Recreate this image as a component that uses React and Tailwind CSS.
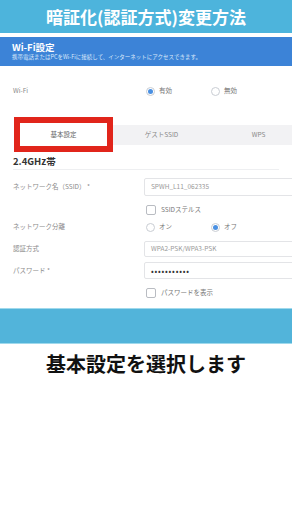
import React from "react";

const font = { fontFamily: '"Noto Sans CJK JP", "Noto Sans", sans-serif' };

function Radio({ checked, label }) {
  return (
    <div className="flex items-center gap-[4px]">
      <span className="flex h-[9px] w-[9px] items-center justify-center rounded-full border border-[#c9cdd3] bg-white">
        {checked && <span className="h-[5px] w-[5px] rounded-full bg-[#4a90e2]" />}
      </span>
      <span className="text-[6.5px] text-[#777]">{label}</span>
    </div>
  );
}

function Check({ label }) {
  return (
    <div className="flex items-center gap-[5px] pl-[2px]">
      <span className="h-[10px] w-[10px] rounded-[2px] border border-[#b9bcc2] bg-white" />
      <span className="text-[6.5px] text-[#777]">{label}</span>
    </div>
  );
}

function Input({ children, className = "" }) {
  return (
    <div className={`flex w-[170px] shrink-0 items-center rounded-[2px] border border-[#e3e4e7] bg-white px-[6px] text-[6.5px] ${className}`}>
      {children}
    </div>
  );
}

function Row({ label, children, className = "" }) {
  return (
    <div className={`flex items-center ${className}`}>
      <div className="w-[144px] shrink-0 pl-[13px] text-[6.5px] text-[#8a8a8a]">{label}</div>
      {children}
    </div>
  );
}

export default function App() {
  return (
    <div className="h-[514px] w-[292px] overflow-hidden bg-white" style={font}>
      <div className="flex h-[33px] items-center justify-center bg-[#4db4dc] pt-[1px] text-[17px] font-bold text-white">
        暗証化(認証方式)変更方法
      </div>
      <div className="mt-[4px] flex h-[29px] flex-col justify-center bg-[#3c83d7] pl-[12px] text-white">
        <div className="text-[9.5px] font-bold leading-[12px]">Wi-Fi設定</div>
        <div className="whitespace-nowrap text-[5.5px] leading-[9px] text-[#dbe8fa]">
          携帯電話またはPCをWi-Fiに接続して、インターネットにアクセスできます。
        </div>
      </div>

      <Row label="Wi-Fi" className="mt-[19px] h-[12px]">
        <div className="flex items-center pl-[2px]">
          <div className="w-[65px]"><Radio checked label="有効" /></div>
          <Radio label="無効" />
        </div>
      </Row>

      <div className="mt-[20px] flex items-center overflow-hidden pl-[14px]">
        <div className="flex h-[35px] w-[99px] shrink-0 items-center justify-center border-[6px] border-[#e1251b] bg-white text-[6.5px] text-[#666]">
          基本設定
        </div>
        <div className="flex h-[20px] w-[97px] shrink-0 items-center justify-center bg-[#f2f2f4] text-[6.5px] text-[#888]">
          ゲストSSID
        </div>
        <div className="flex h-[20px] w-[97px] shrink-0 items-center justify-center bg-[#f2f2f4] text-[6.5px] text-[#888]">
          WPS
        </div>
      </div>

      <div className="mx-[13px] mt-[3px] h-[15px] border-b border-[#eeeff1] text-[9.5px] font-bold leading-[13px] text-[#333]">
        2.4GHz帯
      </div>

      <Row label="ネットワーク名（SSID） *" className="mt-[8px]">
        <Input className="h-[18px] text-[#999]">SPWH_L11_062335</Input>
      </Row>
      <div className="ml-[144px] mt-[9px] h-[11px]">
        <Check label="SSIDステルス" />
      </div>

      <Row label="ネットワーク分離" className="mt-[5px] h-[12px]">
        <div className="flex items-center pl-[2px]">
          <div className="w-[65px]"><Radio label="オン" /></div>
          <Radio checked label="オフ" />
        </div>
      </Row>

      <Row label="認証方式" className="mt-[8px]">
        <Input className="h-[16px] text-[#999]">WPA2-PSK/WPA3-PSK</Input>
      </Row>
      <Row label="パスワード *" className="mt-[5px]">
        <Input className="h-[17px] text-[8px] tracking-[0.8px] text-[#333]">•••••••••••</Input>
      </Row>
      <div className="ml-[144px] mt-[9px] h-[11px]">
        <Check label="パスワードを表示" />
      </div>

      <div className="mt-[9px] h-[36px] border-y border-[#9fd9ec] bg-[#52b4da]" />

      <div className="mt-[7px] text-center text-[20px] font-bold leading-[26px] text-[#111]">
        基本設定を選択します
      </div>
    </div>
  );
}
